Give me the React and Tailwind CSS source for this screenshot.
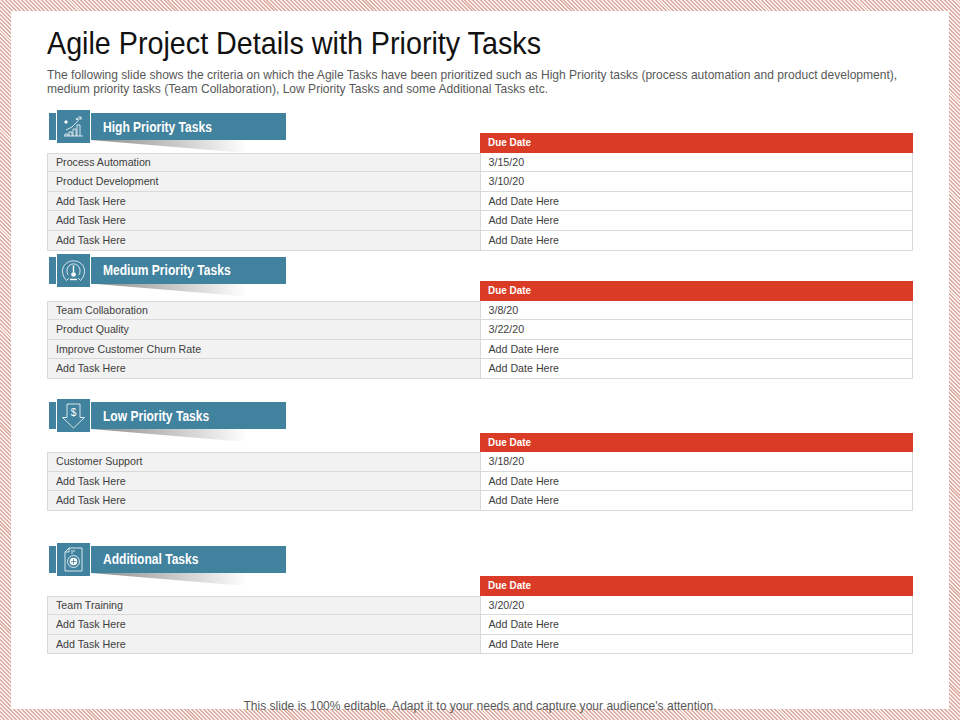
import React from "react";

const sections = [
  { title: "High Priority Tasks", icon: "chart", mt: "mt-[17px]", gap: "mt-[-7px]", rows: [["Process Automation","3/15/20"],["Product Development","3/10/20"],["Add Task Here","Add Date Here"],["Add Task Here","Add Date Here"],["Add Task Here","Add Date Here"]] },
  { title: "Medium Priority Tasks", icon: "gauge", mt: "mt-[6px]", gap: "mt-[-2.5px]", rows: [["Team Collaboration","3/8/20"],["Product Quality","3/22/20"],["Improve Customer Churn Rate","Add Date Here"],["Add Task Here","Add Date Here"]] },
  { title: "Low Priority Tasks", icon: "dollar", mt: "mt-[23px]", gap: "mt-[3.5px]", rows: [["Customer Support","3/18/20"],["Add Task Here","Add Date Here"],["Add Task Here","Add Date Here"]] },
  { title: "Additional Tasks", icon: "file", mt: "mt-[35px]", gap: "mt-[3px]", rows: [["Team Training","3/20/20"],["Add Task Here","Add Date Here"],["Add Task Here","Add Date Here"]] },
];

function Icon({ name }) {
  const p = { fill: "none", stroke: "#fff", strokeWidth: 0.8 };
  return (
    <svg width="33" height="33" viewBox="0 0 33 33">
      {name === "chart" && <g {...p}>
        <path d="M7 26h19M8 26v-2h3v2M12 26v-4h3v4M16 26v-7h3v7M20 26v-11h3v11M9 20l6-3 4-4 5-6M24 7h-3M24 7v3" />
        <circle cx="9" cy="12" r="1.300" fill="#fff" /><circle cx="20" cy="9" r="0.700" fill="#fff" />
      </g>}
      {name === "gauge" && <g {...p}>
        <path d="M9.500 26.500C4 21 4.500 13 9 9.500c4-3.500 11-3.500 15 0 4.500 3.500 5 11.500-.500 17" />
        <path d="M9.500 26.500l2.500-2.500M23.500 26.500L21 24" />
        <path d="M11 21c-2-4-1-8 2-10 2-1.500 5-1.500 7 0 3 2 4 6 2 10" />
        <path d="M16.500 11.500v7" strokeWidth="1.400" /><circle cx="16.500" cy="20.500" r="2.300" fill="#fff" stroke="none" /><path d="M13 25.500h7" strokeWidth="1.400" />
      </g>}
      {name === "dollar" && <g {...p}>
        <path d="M10 5h13v13.500h4.500L16.500 29 5.500 18.500H10z" />
        <text x="16.500" y="16.500" textAnchor="middle" fontSize="10" fill="#fff" stroke="none" fontFamily="Liberation Sans, sans-serif">$</text>
      </g>}
      {name === "file" && <g {...p}>
        <path d="M12 5h13v23H8V9z M12 5v4H8" />
        <path d="M14 8h4M14 10h2" />
        <circle cx="16.500" cy="18.500" r="6" /><circle cx="16.500" cy="18.500" r="3.800" fill="#fff" stroke="none" />
        <path d="M16.500 16v5M14 18.500h5" stroke="#41829e" />
      </g>}
    </svg>
  );
}

function Section({ s }) {
  return (
    <section className={s.mt}>
      <div className="relative h-[27px] ml-[2px] w-[237px] bg-[#41829e] flex items-center">
        <div className="absolute left-[8px] top-[-3px] w-[33px] h-[33px] bg-[#41829e] outline outline-1 outline-white flex items-center justify-center"><Icon name={s.icon} /></div>
        <span className="ml-[54px] pt-[1px] text-[14px] font-bold text-white whitespace-nowrap scale-x-[0.86] origin-left">{s.title}</span>
        <div className="absolute left-[42px] top-[27px] w-[155px] h-[13px] bg-linear-to-r from-[#8c8c8c] to-white [clip-path:polygon(0_0,100%_0,100%_100%)]" />
      </div>
      <div className={`relative ${s.gap} grid grid-cols-[432.5px_433.5px] text-[10.67px] text-[#404040]`}>
        <div />
        <div className="bg-[#da3b26] text-white font-bold pl-[8px] h-[19.6px] leading-[19.6px]"><span className="inline-block scale-x-[0.93] origin-left">Due Date</span></div>
        {s.rows.map((r, i) => (
          <React.Fragment key={i}>
            <div className={`bg-[#f2f2f2] border-b border-l border-[#d9d9d9] pl-[8px] h-[19.6px] ${i === 0 ? "border-t leading-[17.6px]" : "leading-[18.6px]"}`}>{r[0]}</div>
            <div className="bg-white border-b border-l border-r border-[#d9d9d9] pl-[8px] h-[19.6px] leading-[18.6px]">{r[1]}</div>
          </React.Fragment>
        ))}
      </div>
    </section>
  );
}

export default function App() {
  return (
    <div className="relative w-[960px] h-[720px] overflow-hidden p-[11px] bg-[repeating-linear-gradient(45deg,#dfaea3_0,#dfaea3_1.4px,#fbf3f1_1.4px,#fbf3f1_2.8px)] font-['Liberation_Sans',sans-serif]">
      <main className="bg-white h-[698px] px-[36px]">
        <h1 className="pt-[13px] text-[32px] leading-[38px] text-[#111] whitespace-nowrap scale-x-[0.897] origin-left">Agile Project Details with Priority Tasks</h1>
        <p className="mt-[6px] text-[12.06px] leading-[14px] text-[#595959] w-[866px]">The following slide shows the criteria on which the Agile Tasks have been prioritized such as High Priority tasks (process automation and product development), medium priority tasks (Team Collaboration), Low Priority Tasks and some Additional Tasks etc.</p>
        {sections.map((s) => <Section key={s.title} s={s} />)}
      </main>
      <p className="absolute left-0 right-0 bottom-[7px] text-center text-[12.05px] leading-[14px] text-[#595959]">This slide is 100% editable. Adapt it to your needs and capture your audience's attention.</p>
    </div>
  );
}
